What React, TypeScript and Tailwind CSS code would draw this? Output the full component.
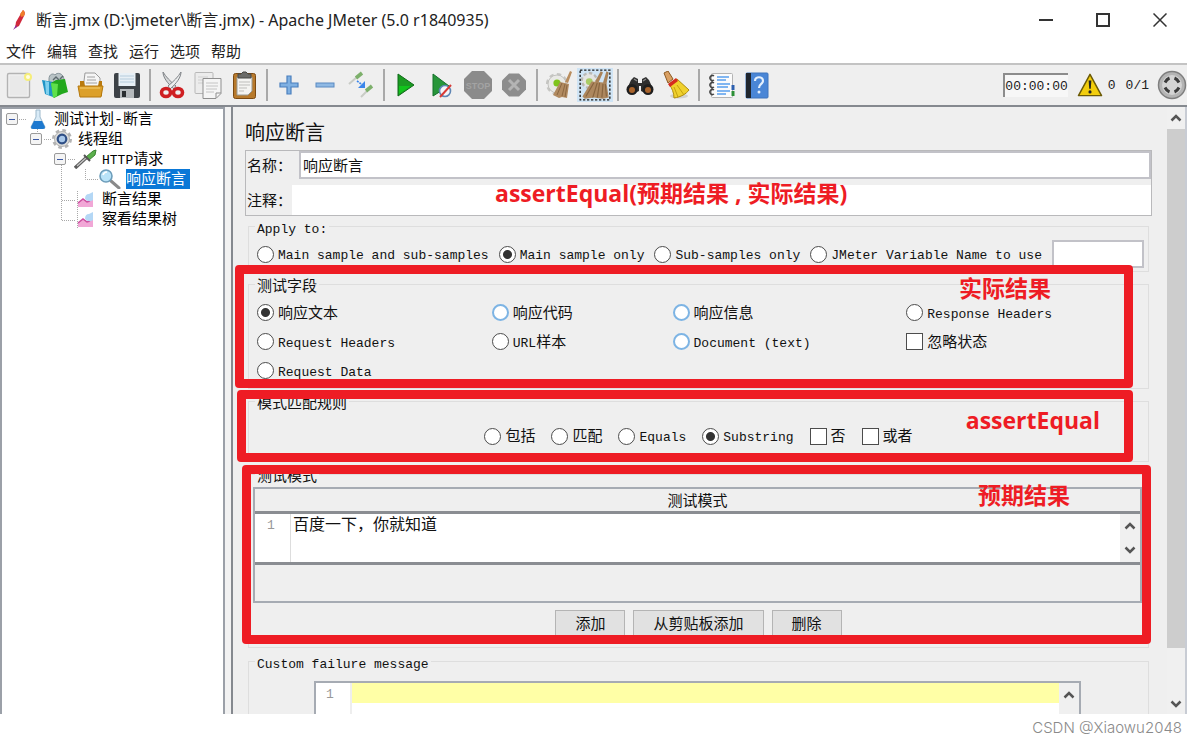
import { useState } from "react";
import type { ReactNode } from "react";

const CJK = "font-['Liberation_Mono','Noto_Sans_CJK_SC',monospace]";
const UI = "font-['Noto_Sans','Noto_Sans_CJK_SC',sans-serif]";

const INDENT = ["pl-1", "pl-7", "pl-[52px]", "pl-[76px]"];

/* ---------- toolbar icons ---------- */

function Icon({ children, size = "size-7" }: { children: ReactNode; size?: string }) {
  return (
    <svg viewBox="0 0 28 28" className={`${size} shrink-0`} fill="none" aria-hidden="true">
      {children}
    </svg>
  );
}

const NewIcon = () => (
  <Icon>
    <rect x="2.5" y="2.5" width="22" height="24" rx="1.5" fill="#f1f1f1" stroke="#b3b3b3" strokeWidth="1.4" />
    <rect x="4.5" y="4.5" width="18" height="20" fill="#e9e9e9" />
    <circle cx="23" cy="6" r="4" fill="#f6ee7a" />
    <circle cx="23" cy="6" r="2" fill="#fffde0" />
  </Icon>
);

const TemplatesIcon = () => (
  <Icon>
    <path d="M8 8c0-5 4-6 6-4 2-3 8-2 9 4l-2 6H8z" fill="#b9c3c6" stroke="#87949a" />
    <path d="M1 9l11 2v15L4 23z" fill="#1f94c6" />
    <path d="M4 10l4 1v13l-3-1z" fill="#7fd0ee" />
    <path d="M10 12l5-3 9-1 3 13-6 2-8 4z" fill="#23a81d" />
    <path d="M10 12l7 1-1 12-4 2z" fill="#5fe04b" />
    <path d="M12 9l3-3 3 3M19 8l3-3" stroke="#5d696e" strokeWidth="1.4" />
  </Icon>
);

const OpenIcon = () => (
  <Icon>
    <path d="M8 2h10l5 5v11H6z" fill="#f5f5f5" stroke="#9a9a9a" />
    <path d="M10 6h8M10 9h9M9 12h11" stroke="#bdbdbd" strokeWidth="1.3" />
    <path d="M3 10h4l1 5h13l1-5h3v15H3z" fill="#b97a0e" />
    <path d="M1 15h25l-2 11H3z" fill="#dca02a" stroke="#b5790f" />
    <path d="M3 17h20" stroke="#f6cf70" />
  </Icon>
);

const SaveIcon = () => (
  <Icon>
    <rect x="1" y="2" width="26" height="25" rx="2" fill="#3d4247" />
    <rect x="5.5" y="2" width="17" height="13" fill="#e8f0f6" />
    <path d="M7 5h14M7 8h14M7 11h14" stroke="#b6ccdc" />
    <rect x="7" y="18" width="14" height="9" fill="#b5b9bc" />
    <rect x="9" y="20" width="4" height="6" fill="#2a2d30" />
  </Icon>
);

const CutIcon = () => (
  <Icon>
    <path d="M5 1c0 5 4 11 11 17l2-3C12 10 8 6 5 1z" fill="#d5d7d8" stroke="#808488" />
    <path d="M23 1c0 5-4 11-11 17l-2-3C16 10 20 6 23 1z" fill="#eceeee" stroke="#808488" />
    <ellipse cx="8" cy="21.5" rx="4.5" ry="4" stroke="#cf1f22" strokeWidth="3.6" />
    <ellipse cx="20" cy="21.5" rx="4.5" ry="4" stroke="#cf1f22" strokeWidth="3.6" />
  </Icon>
);

const CopyIcon = () => (
  <Icon>
    <rect x="1" y="1.5" width="18" height="21" rx="1" fill="#ececec" stroke="#b8b8b8" />
    <path d="M4 6h10M4 9h8M4 12h5" stroke="#d0d0d0" />
    <path d="M9 7.5h18v15L22 27.500H9z" fill="#f5f5f5" stroke="#8f8f8f" />
    <path d="M12 12h12M12 15h12M12 18h11M12 21h8" stroke="#c4c4c4" />
    <path d="M27 22h-5v5" stroke="#8f8f8f" />
  </Icon>
);

const PasteIcon = () => (
  <Icon>
    <rect x="3.5" y="2.5" width="22" height="25" rx="2" fill="#b87a2c" stroke="#7c4a12" />
    <path d="M7 6h15v14l-4 4H7z" fill="#f4f4f2" stroke="#9b9b94" />
    <path d="M9 11h11M9 14h11M9 17h8M9 20h5" stroke="#bdbdbb" />
    <path d="M8 3h3l2-2h3l2 2h3v4H8z" fill="#6b6b68" stroke="#484845" />
  </Icon>
);

const PlusIcon = () => (
  <Icon>
    <path d="M12 5h4v7h7v4h-7v7h-4v-7H5v-4h7z" fill="#7fb0e2" stroke="#4a7fbd" strokeWidth="1.2" />
  </Icon>
);

const MinusIcon = () => (
  <Icon>
    <rect x="5" y="12" width="18" height="4" fill="#8fb9e4" stroke="#5a8ac2" />
  </Icon>
);

const ToggleIcon = () => (
  <Icon>
    <path d="M2 13l8-7" stroke="#c9ccc6" strokeWidth="2" />
    <path d="M9 7l6-5" stroke="#7db06b" strokeWidth="3.6" />
    <path d="M14 26l6-6" stroke="#c9ccc6" strokeWidth="2" />
    <path d="M19 20l6-5" stroke="#7db06b" strokeWidth="3.6" />
    <path d="M10 10l7 5" stroke="#3b86ea" strokeWidth="1.6" strokeDasharray="2 1" />
    <path d="M18 10v7h-7z" fill="#3b86ea" />
  </Icon>
);

const StartIcon = () => (
  <Icon>
    <path d="M6 3l16 11L6 25z" fill="#1b9a22" stroke="#0f6b18" />
    <path d="M7 15l12 0L7 23z" fill="#12c41c" />
  </Icon>
);

const StartNoPauseIcon = () => (
  <Icon>
    <path d="M5 3l16 12L5 25z" fill="#27963a" stroke="#14702a" />
    <circle cx="17" cy="20" r="5.5" fill="#f3f6fb" stroke="#5f86b4" strokeWidth="1.6" />
    <path d="M12 26L23 14" stroke="#d93a35" strokeWidth="2" />
  </Icon>
);

const StopIcon = () => (
  <Icon>
    <path d="M8 0h12l8 8v12l-8 8H8l-8-8V8z" fill="#8b8b8b" />
    <text x="14" y="18" fontSize="9" fontWeight="bold" textAnchor="middle" fill="#a3a3a3" className="font-['Liberation_Sans',sans-serif]">
      STOP
    </text>
  </Icon>
);

const ShutdownIcon = () => (
  <Icon>
    <path d="M9 2.5h10l7 7v9l-7 7H9l-7-7v-9z" fill="#8d8d8d" />
    <path d="M9 9l10 10M19 9L9 19" stroke="#b4b4b4" strokeWidth="3" />
  </Icon>
);

const ClearIcon = () => (
  <Icon>
    <circle cx="12" cy="13" r="9" stroke="#c6c6c3" strokeWidth="4" strokeDasharray="4 3" />
    <circle cx="12" cy="13" r="9" fill="#e9e9e6" stroke="#c2c2bf" />
    <circle cx="12" cy="12" r="3.6" fill="#7fc41c" />
    <path d="M25 0l2 1-4 11-3-1z" fill="#b98d5e" />
    <path d="M15 11l9 2-2 14-5-1-3 1-6-3z" fill="#b18a60" />
    <path d="M17 12l-5 12M20 13l-3 12M22 14l-2 12" stroke="#8b6740" />
  </Icon>
);

const ClearAllIcon = () => (
  <Icon size="size-8">
    <circle cx="9" cy="10" r="6.5" fill="#e4e4e2" stroke="#b9b9b6" strokeWidth="2" strokeDasharray="3 2" />
    <circle cx="9" cy="11" r="3" fill="#a9cc66" />
    <path d="M19 2l2 1-4 9-3-1zM24 2l2 1-2 10-3-1z" fill="#a98258" />
    <path d="M11 11l13 1 2 13-5 1-8-1-8 1-2-2z" fill="#ad875e" />
    <path d="M13 12L6 24M16 12l-4 13M18 12l-2 13M21 13l-1 12M23 13l1 11" stroke="#87643f" />
    <rect x="1" y="1" width="26" height="26" stroke="#1d1d1d" strokeWidth="1.2" strokeDasharray="2 1.5" />
  </Icon>
);

const SearchIcon = () => (
  <Icon>
    <path d="M8 6l4 2v4h4V8l4-2 3 3 4 9-6 5-6-3v-5h-2v5l-6 3-6-5 4-9z" fill="#2e2e2e" />
    <circle cx="6" cy="18.5" r="5.5" fill="#1f1f1f" />
    <circle cx="22" cy="18.5" r="5.5" fill="#1f1f1f" />
    <circle cx="6" cy="19" r="3" fill="#a9632b" />
    <circle cx="22" cy="19" r="3" fill="#a9632b" />
    <path d="M8 8l3 2M20 8l-3 2" stroke="#8a8a8a" strokeWidth="1.5" />
  </Icon>
);

const ResetSearchIcon = () => (
  <Icon>
    <ellipse cx="17" cy="25" rx="9" ry="2.5" fill="#d2d2cf" />
    <path d="M2 2l4-2 5 8-5 4z" fill="#d9a063" stroke="#8d5a22" />
    <path d="M7 13l8-5 12 11c-3 4-8 7-15 8 0-5-2-10-5-14z" fill="#f0d12d" stroke="#af8c0b" />
    <path d="M6 13l8-6 2 3-8 6z" fill="#d62b1f" />
    <path d="M12 16l4 10M15 14l7 10" stroke="#c3a10e" />
  </Icon>
);

const FunctionHelperIcon = () => (
  <Icon>
    <rect x="4.5" y="2.5" width="21" height="24" rx="1" fill="#fbfbfb" stroke="#b4b4b4" />
    <path d="M10 6h12M10 13h13M10 20h13M10 9h9M10 16h11M10 23h9" stroke="#5aa0ee" strokeWidth="1.6" />
    <path d="M7 5a2.5 2.5 0 1 0 0 4M7 12a2.5 2.5 0 1 0 0 4M7 19a2.5 2.5 0 1 0 0 4" stroke="#444" strokeWidth="1.5" />
    <path d="M26 14v5" stroke="#2d5fae" strokeWidth="3" />
    <path d="M26 20v5" stroke="#2c8f36" strokeWidth="3" />
  </Icon>
);

const HelpIcon = () => (
  <Icon>
    <rect x="3" y="2" width="22" height="25" rx="1" fill="#4a86d6" stroke="#3f74bd" />
    <rect x="3" y="2" width="5" height="25" fill="#20262e" />
    <path d="M12 10c0-5 8-5 8 0 0 3-4 3-4 7" stroke="#e4f0fd" strokeWidth="2.2" />
    <circle cx="16" cy="21" r="1.5" fill="#e4f0fd" />
  </Icon>
);

const TOOLBAR = [
  [["新建", NewIcon], ["模板", TemplatesIcon], ["打开", OpenIcon], ["保存", SaveIcon]],
  [["剪切", CutIcon], ["复制", CopyIcon], ["粘贴", PasteIcon]],
  [["展开", PlusIcon], ["折叠", MinusIcon], ["切换", ToggleIcon]],
  [["启动", StartIcon], ["不停顿开始", StartNoPauseIcon], ["停止", StopIcon], ["关闭", ShutdownIcon]],
  [["清除", ClearIcon], ["清除全部", ClearAllIcon]],
  [["查找", SearchIcon], ["重置搜索", ResetSearchIcon]],
  [["函数助手", FunctionHelperIcon], ["帮助", HelpIcon]],
] as [string, () => ReactNode][][];

function Toolbar() {
  return (
    <div className="flex h-[42px] items-center border-t-2 border-[#c3c3c3] bg-[#efefef] pl-px">
      {TOOLBAR.map((group, i) => (
        <div key={i} className="flex items-center">
          {i > 0 && (
            <span className="flex w-[9px] justify-center">
              <span className="h-8 w-0.5 bg-[#a9a9a9]" />
            </span>
          )}
          {group.map(([title, Glyph]) => (
            <button
              key={title}
              type="button"
              title={title}
              className={`flex h-[34px] w-9 items-center justify-center ${
                Glyph === ClearAllIcon ? "bg-[#cfe4f5]" : ""
              }`}
            >
              <Glyph />
            </button>
          ))}
        </div>
      ))}
      <div className={`ml-auto flex items-center text-[13px] text-[#222] ${CJK}`}>
        <span className="h-6 border-t-2 border-l-2 border-[#8c8c8c] bg-[#f7f7f7] leading-6">
          00:00:00
        </span>
        <svg viewBox="0 0 28 26" className="ml-2 h-6 w-7" aria-hidden="true">
          <path d="M14 1.5L26.500 24.500h-25z" fill="#f2cd0c" stroke="#6b5a06" strokeWidth="1.6" strokeLinejoin="round" />
          <path d="M12.500 8h3l-.7 9h-1.600z" fill="#222" />
          <circle cx="14" cy="20.5" r="1.7" fill="#222" />
        </svg>
        <span className="ml-1 pt-0.5">0</span>
        <span className="ml-2.5 pt-0.5">0/1</span>
        <svg viewBox="0 0 30 30" className="ml-2 size-[30px]" aria-hidden="true">
          <circle cx="15" cy="15" r="13.5" fill="#b4b4b4" stroke="#7f7f7f" strokeWidth="1.5" />
          <circle cx="15" cy="15" r="10" fill="#d4d4d4" />
          <path
            d="M8 12.500c1-2 2-3.500 4.500-4.500M22 12.500c-1-2-2-3.500-4.500-4.500M8 17.500c1 2 2 3.500 4.500 4.500M22 17.500c-1 2-2 3.500-4.500 4.500"
            stroke="#3b3b3b"
            strokeWidth="3"
            fill="none"
          />
        </svg>
      </div>
    </div>
  );
}

/* ---------- test plan tree ---------- */

const FlaskIcon = () => (
  <svg viewBox="0 0 24 20" className="h-5 w-6" aria-hidden="true">
    <path d="M10 1h4v7l5 10q0 2-2 2H7q-2 0-2-2l5-10z" fill="#d9ebf7" stroke="#9db9cc" />
    <path d="M8 12h8l3 6q0 2-2 2H7q-2 0-2-2z" fill="#1d79cf" />
  </svg>
);

const GearIcon = () => (
  <svg viewBox="0 0 24 20" className="h-5 w-6" fill="none" aria-hidden="true">
    <circle cx="12" cy="10" r="8" stroke="#b4b4b4" strokeWidth="4" strokeDasharray="3.3 3" />
    <circle cx="12" cy="10" r="7.5" fill="#dcdcda" stroke="#b3b3b3" />
    <circle cx="12" cy="10" r="4.3" fill="#a9c8ea" stroke="#2f4f86" strokeWidth="2.2" />
  </svg>
);

const DropperIcon = () => (
  <svg viewBox="0 0 24 20" className="h-5 w-6" fill="none" aria-hidden="true">
    <path d="M1 19L13 8" stroke="#5d5d5d" strokeWidth="3.4" />
    <path d="M3 17L13 8" stroke="#c8c8c8" strokeWidth="1.2" />
    <path d="M12 8l7-6 3-1-1 5-6 5z" fill="#5bb04c" stroke="#3c8532" />
    <path d="M10 6l6 6" stroke="#555" strokeWidth="2" />
  </svg>
);

const LensIcon = () => (
  <svg viewBox="0 0 24 20" className="h-5 w-6" fill="none" aria-hidden="true">
    <path d="M13 12l8 7" stroke="#8a8a8a" strokeWidth="3" strokeLinecap="round" />
    <circle cx="8" cy="7" r="6" fill="#b9e3f8" stroke="#6d9dba" strokeWidth="1.6" />
    <path d="M5 6q1-3 4-3" stroke="#fff" strokeWidth="1.6" />
  </svg>
);

const ListenerIcon = () => (
  <svg viewBox="0 0 24 20" className="h-5 w-6" fill="none" aria-hidden="true">
    <path d="M4 18v-4l5-4 4 2 6-2v8z" fill="#f1a7d6" />
    <path d="M4 14l5-4 4 3 3-1" stroke="#cc4e9e" strokeWidth="1.5" />
    <path d="M11 10q0-5 4-5l4-2v8q-4 3-8-1z" fill="#b4d7f5" />
  </svg>
);

function Tree() {
  const rows = [
    { depth: 0, Glyph: FlaskIcon, latin: "", label: "测试计划-断言", open: true },
    { depth: 1, Glyph: GearIcon, latin: "", label: "线程组", open: true },
    { depth: 2, Glyph: DropperIcon, latin: "HTTP", label: "请求", open: true },
    { depth: 3, Glyph: LensIcon, latin: "", label: "响应断言", selected: true },
    { depth: 2, Glyph: ListenerIcon, latin: "", label: "断言结果" },
    { depth: 2, Glyph: ListenerIcon, latin: "", label: "察看结果树" },
  ];
  return (
    <nav
      className={`relative w-[225px] shrink-0 border-2 border-b-0 border-[#9ba0a8] bg-white ${CJK}`}
    >
      <svg
        className="pointer-events-none absolute top-0 left-0 h-[130px] w-[120px]"
        fill="none"
        stroke="#a8a8a8"
        strokeDasharray="1 1"
        aria-hidden="true"
      >
        <path d="M17 10.500h8M35.500 20v5M42 30.500h8M59.500 56v56M66 50.500h8M83.500 60v10.500h13M60 91.500h14M60 111.500h14M75.500 82v38" />
      </svg>
      <ul>
        {rows.map(({ depth, Glyph, latin, label, open, selected }) => (
          <li key={label} className={`flex h-5 items-center ${INDENT[depth]}`}>
            {open ? (
              <button
                type="button"
                aria-label={`折叠 ${label}`}
                className="flex size-3 items-center justify-center rounded-[2px] border border-[#9a9a9a] bg-[#f4f4f4]"
              >
                <span className="h-px w-1.5 bg-[#3b58a5]" />
              </button>
            ) : (
              <span className="w-3" />
            )}
            <span className="ml-2 w-6">
              <Glyph />
            </span>
            <span
              className={`ml-1 h-5 pr-1 text-[15px] leading-6 whitespace-nowrap ${
                selected ? "bg-[#0a78d7] text-white" : "text-black"
              }`}
            >
              {latin && <span className="text-[13px]">{latin}</span>}
              {label}
            </span>
          </li>
        ))}
      </ul>
    </nav>
  );
}

/* ---------- form pieces ---------- */

function Chevron({ down = false }: { down?: boolean }) {
  return (
    <svg viewBox="0 0 12 8" className="h-2 w-3" fill="none" stroke="#555" strokeWidth="2.5" aria-hidden="true">
      <path d={down ? "M1.5 1.5L6 6l4.5-4.5" : "M1.5 6.5L6 2l4.5 4.5"} />
    </svg>
  );
}

function Group({ title, latin, className = "", children, note }: {
  title: string;
  latin?: boolean;
  className?: string;
  children: ReactNode;
  note?: ReactNode;
}) {
  return (
    <div className={`relative mx-[3px] ${className}`}>
      <fieldset className="h-full min-w-0 border border-[#dedede]">
        <legend
          className={`ml-1.5 px-0.5 pt-2 leading-3 ${latin ? "text-[13px]" : "text-[15px]"}`}
        >
          {title}
        </legend>
        {children}
      </fieldset>
      {note}
    </div>
  );
}

function Option({ type = "radio", name, text, latin = "", checked, onPick, blue }: {
  type?: "radio" | "checkbox";
  name: string;
  text: string;
  latin?: string;
  checked?: boolean;
  onPick?: () => void;
  blue?: boolean;
}) {
  const shape =
    type === "radio"
      ? "rounded-full checked:bg-[radial-gradient(circle,#333_0_4px,#fff_5px)]"
      : "checked:bg-[#555]";
  return (
    <label className="flex items-center gap-1 whitespace-nowrap">
      <input
        type={type}
        name={name}
        {...(type === "radio" ? { checked, onChange: onPick } : {})}
        className={`size-[17px] shrink-0 appearance-none bg-white ${shape} ${
          blue ? "border-2 border-[#7db4e4]" : "border border-[#4c4c4c]"
        }`}
      />
      <span className="pt-1 text-[15px] leading-5">
        {latin && <span className="text-[13px]">{latin}</span>}
        {text}
      </span>
    </label>
  );
}

const MARK =
  "absolute z-10 text-[23px] leading-8 font-bold whitespace-nowrap text-[#ee1c24] font-['Open_Sans','Noto_Sans_CJK_SC',sans-serif]";

function Frame({ className }: { className: string }) {
  return (
    <div
      className={`pointer-events-none absolute rounded-[4px] border-[9px] border-[#ee1c24] ${className}`}
    />
  );
}

const SCOPES = ["Main sample and sub-samples", "Main sample only", "Sub-samples only", "JMeter Variable Name to use"];

const FIELDS = [
  { latin: "", text: "响应文本" },
  { latin: "", text: "响应代码", blue: true },
  { latin: "", text: "响应信息", blue: true },
  { latin: "Response Headers", text: "" },
  { latin: "Request Headers", text: "" },
  { latin: "URL", text: "样本" },
  { latin: "Document (text)", text: "", blue: true },
  { latin: "", text: "忽略状态", box: true },
  { latin: "Request Data", text: "" },
];

const RULES = [
  { latin: "", text: "包括" },
  { latin: "", text: "匹配" },
  { latin: "Equals", text: "" },
  { latin: "Substring", text: "" },
  { latin: "", text: "否", box: true },
  { latin: "", text: "或者", box: true },
];

function AssertionForm() {
  const [scope, setScope] = useState(1);
  const [field, setField] = useState(0);
  const [rule, setRule] = useState(3);

  return (
    <main
      className={`min-w-0 flex-1 overflow-hidden border-l-2 border-[#85898f] bg-[#efefef] pt-3.5 pr-[15px] pl-3 text-[#111] ${CJK}`}
    >
      <h1 className="h-6 text-xl leading-7">响应断言</h1>

      <div className="relative mt-[5px] h-[66px] border border-[#b9b9bb] text-[15px]">
        <div className="flex h-7 items-center">
          <label htmlFor="name" className="w-[53px] shrink-0 pt-1.5 pl-px whitespace-nowrap">
            名称：
          </label>
          <input
            id="name"
            defaultValue="响应断言"
            className="h-full min-w-0 flex-1 border-2 border-[#c2c2c8] bg-white px-0.5"
          />
        </div>
        <div className="mt-1.5 flex h-[30px] items-center">
          <label htmlFor="comment" className="w-[46px] shrink-0 pt-1.5 pl-px whitespace-nowrap">
            注释：
          </label>
          <input id="comment" className="h-full min-w-0 flex-1 bg-white px-1" />
        </div>
        <span className={`${MARK} top-[26px] left-[249px]`}>assertEqual(预期结果 , 实际结果)</span>
      </div>

      <Group title="Apply to:" latin className="h-14">
        <div className="flex h-9 items-center gap-2.5 pr-1 pl-2">
          {SCOPES.map((s, i) => (
            <Option key={s} name="scope" latin={s} text="" checked={scope === i} onPick={() => setScope(i)} />
          ))}
          <input
            aria-label="JMeter Variable Name"
            className="h-7 w-[93px] min-w-0 border-2 border-[#c2c2c8] bg-white px-1"
          />
        </div>
      </Group>

      <Group
        title="测试字段"
        className="mt-0.5 h-[115px]"
        note={
          <>
            <Frame className="-top-[9px] right-4 bottom-px -left-[13px]" />
            <span className={`${MARK} -top-0.5 right-[98px]`}>实际结果</span>
          </>
        }
      >
        <div className="grid auto-rows-[29px] grid-cols-[235fr_181fr_234fr_242fr] items-center pt-1 pl-2">
          {FIELDS.map(({ latin, text, blue, box }, i) => (
            <Option
              key={latin + text}
              type={box ? "checkbox" : "radio"}
              name={box ? "ignore" : "field"}
              latin={latin}
              text={text}
              blue={blue}
              checked={field === i}
              onPick={() => setField(i)}
            />
          ))}
        </div>
      </Group>

      <Group
        title="模式匹配规则"
        className="mt-0.5 h-[71px]"
        note={
          <>
            <Frame className="-top-px right-4 bottom-0 -left-[11px]" />
            <span className={`${MARK} top-[13px] right-[49px]`}>assertEqual</span>
          </>
        }
      >
        <div className="flex h-[50px] items-center justify-center gap-4">
          {RULES.map(({ latin, text, box }, i) => (
            <Option
              key={latin + text}
              type={box ? "checkbox" : "radio"}
              name={box ? `flag-${i}` : "rule"}
              latin={latin}
              text={text}
              checked={rule === i}
              onPick={() => setRule(i)}
            />
          ))}
        </div>
      </Group>

      <Group
        title="测试模式"
        className="mt-0.5 h-[184px]"
        note={
          <>
            <Frame className="top-px -right-0.5 bottom-1 -left-1.5" />
            <span className={`${MARK} top-[15px] right-[79px]`}>预期结果</span>
          </>
        }
      >
        <div className="mt-[3px] mr-1.5 ml-1 h-[116px] border-2 border-[#a6abb3]">
          <table className="w-full border-collapse">
            <thead>
              <tr>
                <th className="h-[22px] p-0 pt-1.5 text-[15px] leading-4 font-normal">测试模式</th>
              </tr>
            </thead>
            <tbody>
              <tr>
                <td className="p-0">
                  <div className="flex h-[54px] border-y-[3px] border-[#8a8d92] bg-white">
                    <span className="w-9 shrink-0 border-r border-[#ddd] pl-3 text-[13px] leading-6 text-[#999]">
                      1
                    </span>
                    <textarea
                      aria-label="测试模式"
                      defaultValue="百度一下，你就知道"
                      className="min-w-0 flex-1 resize-none overflow-hidden bg-white px-0.5 pt-0.5 text-base leading-5"
                    />
                    <div className="flex w-5 flex-col items-center justify-between bg-[#f0f0f0] py-2">
                      <Chevron />
                      <Chevron down />
                    </div>
                  </div>
                </td>
              </tr>
            </tbody>
          </table>
        </div>
        <div className="mt-[7px] flex justify-center gap-2 text-[15px]">
          {["添加", "从剪贴板添加", "删除"].map((b) => (
            <button
              key={b}
              type="button"
              className="h-7 border border-[#b4b4b4] bg-[#e1e1e1] px-[19px] pt-1 leading-5 whitespace-nowrap"
            >
              {b}
            </button>
          ))}
        </div>
      </Group>

      <Group title="Custom failure message" latin className="mt-[3px] h-40">
        <div className="mt-2.5 mr-[67px] ml-[65px] flex h-24 border-2 border-[#a6abb3] bg-white">
          <span className="w-9 shrink-0 border-r-2 border-[#eee] pl-2.5 text-[13px] leading-6 text-[#999]">
            1
          </span>
          <textarea
            aria-label="Custom failure message"
            rows={1}
            className="h-5 min-w-0 flex-1 resize-none overflow-hidden bg-[#ffffa6] text-[13px]"
          />
          <div className="flex w-5 justify-center bg-[#f0f0f0] pt-2">
            <Chevron />
          </div>
        </div>
      </Group>
    </main>
  );
}

export default function App() {
  return (
    <div className="flex h-screen flex-col overflow-hidden bg-white">
      <div className="mr-[9px] flex min-h-0 flex-1 flex-col">
        <header className={`flex h-10 shrink-0 items-center pl-3 text-[#222] ${UI}`}>
          <svg viewBox="0 0 14 22" className="h-[22px] w-3.5" aria-hidden="true">
            <path d="M11 1q3 2 1 6L7 17l-4 2 1-6z" fill="#d0283c" />
            <path d="M11 1q3 2 1 6L9 8 8 5z" fill="#ef7d2b" />
            <path d="M4 16l-3 5 4-3z" fill="#8b2e9b" />
          </svg>
          <span className="ml-2.5 text-base whitespace-nowrap">
            断言.jmx (D:\jmeter\断言.jmx) - Apache JMeter (5.0 r1840935)
          </span>
          <div className="mr-5 ml-auto flex items-center gap-[43px]">
            <button type="button" aria-label="最小化" className="h-0.5 w-3.5 bg-[#333]" />
            <button type="button" aria-label="最大化" className="size-3.5 border-2 border-[#333]" />
            <button type="button" aria-label="关闭窗口">
              <svg viewBox="0 0 14 14" className="size-3.5" stroke="#333" strokeWidth="1.5" aria-hidden="true">
                <path d="M.5.5l13 13M13.500.5L.5 13.500" />
              </svg>
            </button>
          </div>
        </header>
        <div className={`flex h-[23px] shrink-0 items-center gap-[11px] pl-1.5 text-[15px] text-[#222] ${UI}`}>
          {["文件", "编辑", "查找", "运行", "选项", "帮助"].map((m) => (
            <button key={m} type="button" className="whitespace-nowrap">
              {m}
            </button>
          ))}
        </div>
        <Toolbar />

        <div className="flex min-h-0 flex-1 border-t-2 border-[#85898f] bg-[#efefef]">
          <Tree />
          <div className="w-1.5 shrink-0 bg-[#f2f2f2]" />
          <AssertionForm />
          <div className="flex w-5 shrink-0 flex-col items-center border-r-2 border-[#c8ccd4] bg-[#f0f0f0]">
            <div className="flex h-[22px] items-center">
              <Chevron />
            </div>
            <div className="w-full flex-1 bg-[#cdcdcd]" />
            <div className="flex h-[66px] items-end pb-1.5">
              <Chevron down />
            </div>
          </div>
        </div>
      </div>
      <footer className="flex h-7 shrink-0 items-center justify-end pr-3.5 text-[15px] font-light text-[#8a8a8a] font-['Inter',sans-serif]">
        CSDN @Xiaowu2048
      </footer>
    </div>
  );
}
